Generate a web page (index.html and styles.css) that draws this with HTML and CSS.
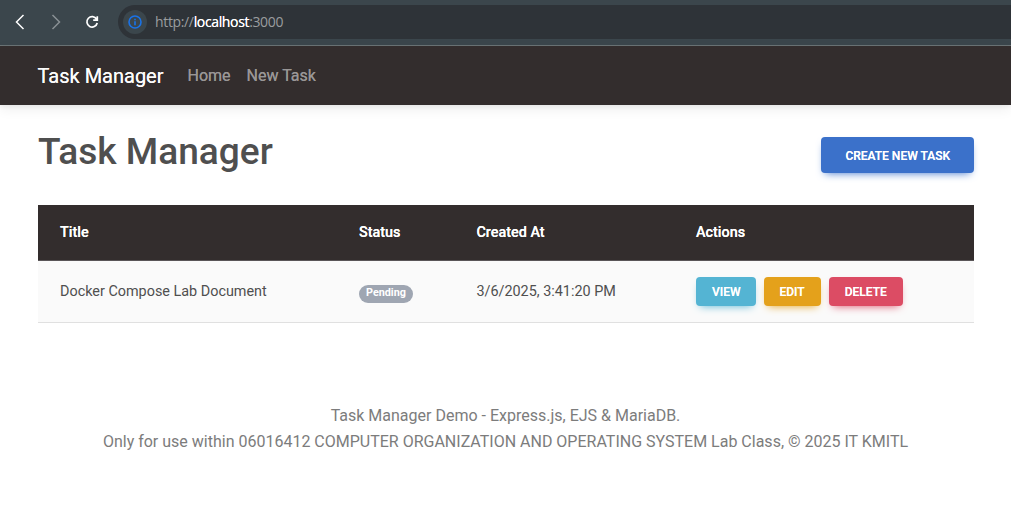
FILE: index.html
```
<!DOCTYPE html>
<html lang="en">
<head>
<meta charset="utf-8">
<title>Task Manager</title>
<link rel="stylesheet" href="styles.css">
</head>
<body>
<div class="toolbar">
  <svg class="tool back" width="16" height="16" viewBox="0 0 16 16"><path d="M11.5 1 4.5 8l7 7"/></svg>
  <svg class="tool forward" width="16" height="16" viewBox="0 0 16 16"><path d="m4.5 1 7 7-7 7"/></svg>
  <svg class="tool reload" width="16" height="16" viewBox="0 0 16 16"><path d="M12.6 5.2A5.2 5.2 0 1 0 13.2 9M13.3 2.2V6.2H9.2"/></svg>
  <div class="address">
    <span class="site-info"><svg width="14" height="14" viewBox="0 0 14 14"><circle cx="7" cy="7" r="6"/><path d="M7 6.2V10.2M7 3.8V5.2"/></svg></span>
    <span class="url">http://<span class="host">localhost</span>:3000</span>
  </div>
</div>
<nav class="navbar">
  <a class="brand">Task Manager</a>
  <a class="nav-link">Home</a>
  <a class="nav-link">New Task</a>
</nav>
<main class="container">
  <div class="heading">
    <h1>Task Manager</h1>
    <a class="btn btn-primary">Create New Task</a>
  </div>
  <table class="table">
    <colgroup><col class="col-title"><col class="col-status"><col class="col-created"><col></colgroup>
    <thead><tr><th>Title</th><th>Status</th><th>Created At</th><th>Actions</th></tr></thead>
    <tbody>
      <tr>
        <td>Docker Compose Lab Document</td>
        <td><span class="badge">Pending</span></td>
        <td>3/6/2025, 3:41:20 PM</td>
        <td><div class="actions"><a class="btn btn-sm btn-info">View</a><a class="btn btn-sm btn-warning">Edit</a><a class="btn btn-sm btn-danger">Delete</a></div></td>
      </tr>
    </tbody>
  </table>
</main>
<footer class="footer">
  <p>Task Manager Demo - Express.js, EJS &amp; MariaDB.</p>
  <p>Only for use within 06016412 COMPUTER ORGANIZATION AND OPERATING SYSTEM Lab Class, © 2025 IT KMITL</p>
</footer>
</body>
</html>
```
FILE: styles.css
```
* { box-sizing: border-box; }
body { margin: 0; height: 512px; overflow: hidden; background: #fff; color: #4f4f4f; font-family: Roboto, sans-serif; font-size: 16px; line-height: 1.6; }
h1, p { margin: 0; }
.toolbar { display: flex; align-items: center; height: 46px; padding: 0 0 2px 12px; background: #3b464c; border-bottom: 1px solid #6b7476; }
.tool { flex: none; fill: none; stroke: #fff; stroke-width: 1.5; }
.forward { margin-left: 20px; stroke: #899094; }
.reload { margin-left: 20px; stroke-width: 1.7; }
.address { display: flex; align-items: center; flex: 1; height: 34px; margin-left: 18px; padding-left: 5px; background: #2e3338; border-radius: 17px 0 0 17px; }
.site-info { display: flex; align-items: center; justify-content: center; width: 24px; height: 24px; border-radius: 50%; background: #3b464c; }
.site-info svg { fill: none; stroke: #1a73e8; stroke-width: 1.6; }
.url { margin-left: 8px; color: #9a9d9f; font: 14px/20px "Open Sans", sans-serif; letter-spacing: -0.35px; }
.host { color: #fff; text-shadow: 0 0 0.4px #fff; }
.navbar { display: flex; align-items: center; height: 59px; padding: 0 38px 0 37.5px; background: #332d2d; box-shadow: 0 4px 12px 0 rgba(0,0,0,.07), 0 2px 4px rgba(0,0,0,.05); }
.brand { margin-right: 24px; color: #fbfbfb; font-size: 20px; text-shadow: 0 0 0.4px #fbfbfb; }
.nav-link { margin-right: 16px; color: #999696; text-shadow: 0 0 0.4px #999696; }
.container { margin: 0 37px 0 38px; }
.heading { display: flex; align-items: flex-start; justify-content: space-between; height: 100px; padding-top: 24px; }
h1 { font-size: 37.1px; font-weight: 500; line-height: 46px; }
.btn { padding: 10px 24px 8px; border-radius: 4px; color: #fff; font-size: 12px; font-weight: 500; line-height: 18px; text-transform: uppercase; text-shadow: 0 0 0.4px #fff; }
.btn-primary { margin-top: 8px; background: #3b71ca; box-shadow: 0 4px 9px -4px #3b71ca; }
.btn-sm { padding: 6px 16px 5px; }
.btn-info { padding-right: 15px; background: #54b4d3; box-shadow: 0 4px 9px -4px #54b4d3; }
.btn-warning { background: #e4a11b; box-shadow: 0 4px 9px -4px #e4a11b; }
.btn-danger { background: #dc4c64; box-shadow: 0 4px 9px -4px #dc4c64; }
.table { width: 936px; border-collapse: separate; border-spacing: 0; table-layout: fixed; font-size: 14.4px; text-align: left; }
.col-title { width: 299px; }
.col-status { width: 117px; }
.col-created { width: 220px; }
.table th, .table td { padding: 0 22px; white-space: nowrap; vertical-align: middle; }
.table th:nth-child(3), .table td:nth-child(3) { padding-left: 22.4px; }
.table th { height: 56px; background: #332d2d; border-bottom: 1px solid #5a5658; color: #fff; font-weight: 500; text-shadow: 0 0 0.4px #fff; }
.table td { height: 62px; background: #fafafa; border-bottom: 1px solid #e0e0e0; }
.badge { display: inline-block; padding: 3px 7px 5px; border-radius: 10px; background: #9fa6b2; color: #fff; font-size: 10.8px; font-weight: 700; line-height: 10px; vertical-align: 0; }
.actions { display: flex; gap: 8px; }
.footer { margin-top: 80px; color: #7c7c7c; text-align: center; line-height: 25.6px; }
```
